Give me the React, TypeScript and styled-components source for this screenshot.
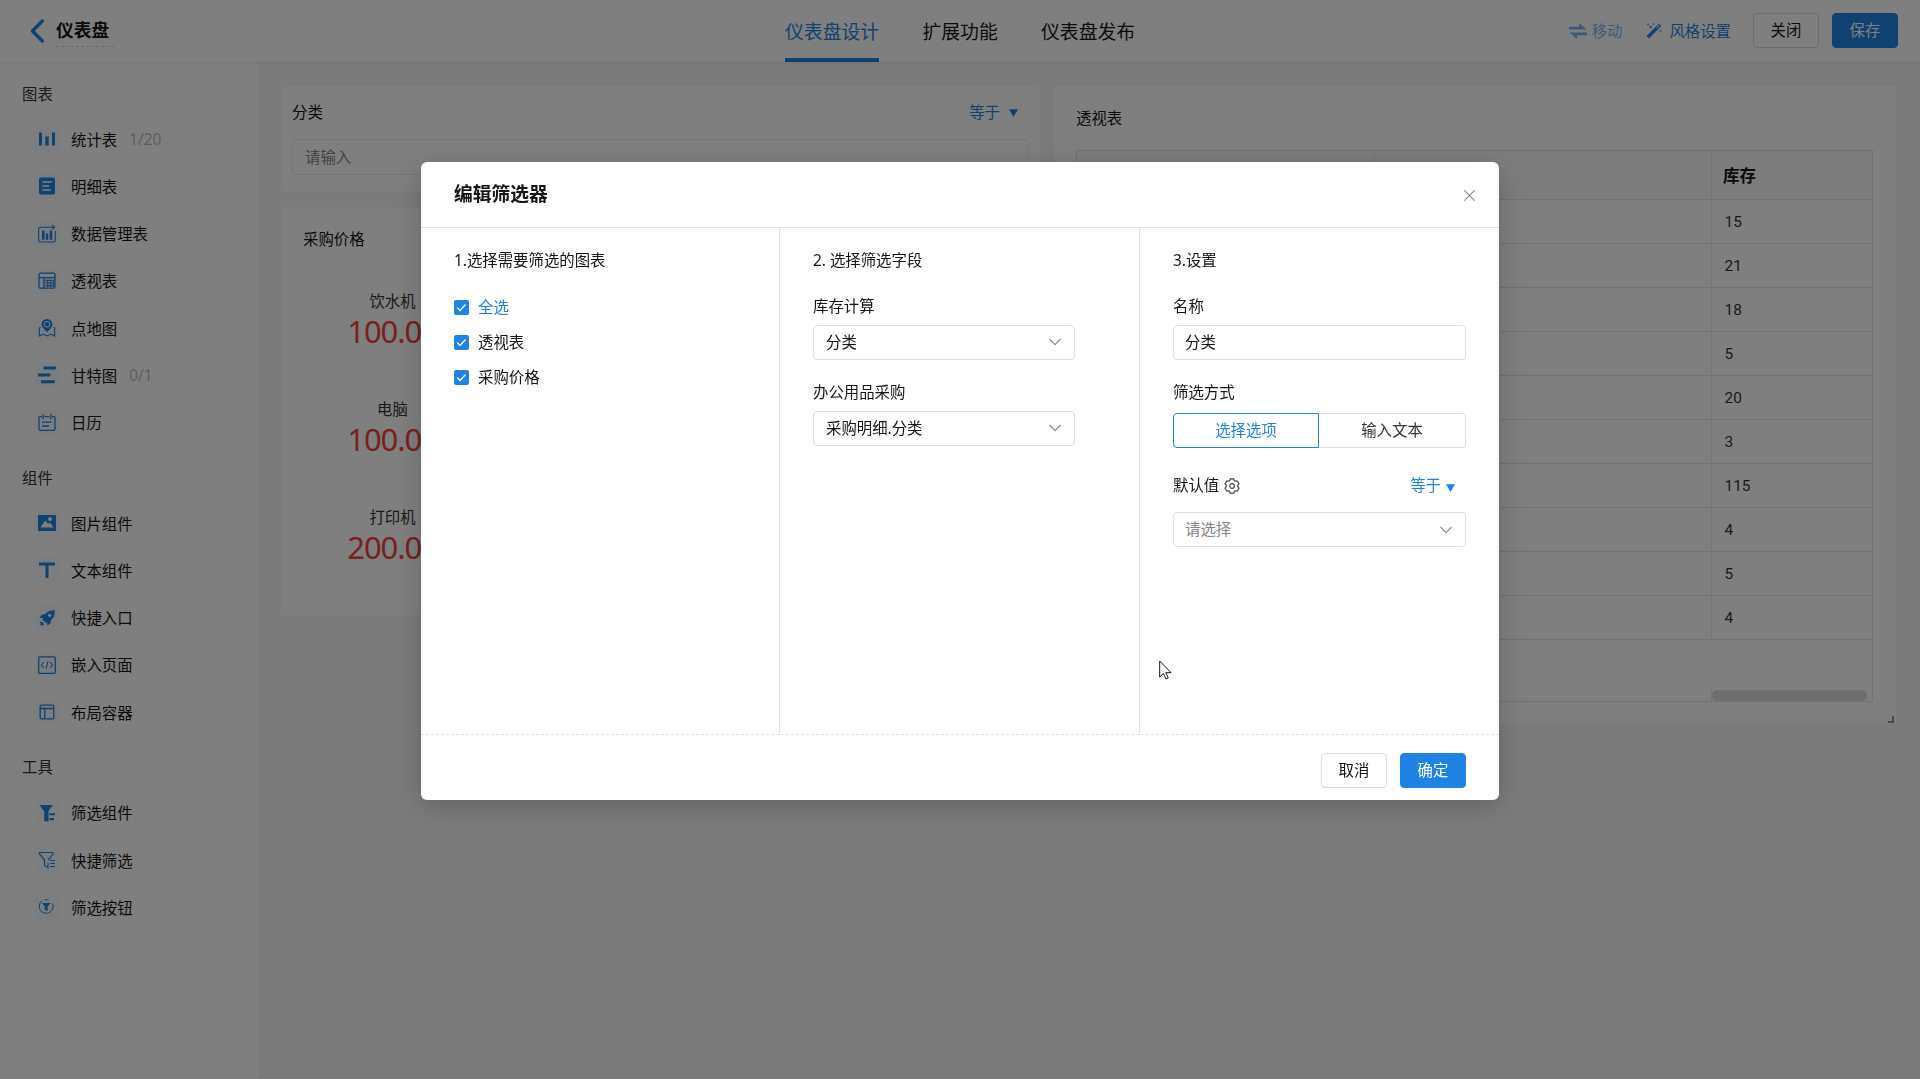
import React from 'react';
import styled, { createGlobalStyle, css } from 'styled-components';

const blue = '#1e83e3';

const Global = createGlobalStyle`
  * { box-sizing: border-box; }
  html, body { margin: 0; padding: 0; overflow: hidden; }
  body {
    font-family: "Noto Sans", "Noto Sans CJK SC", sans-serif;
    font-size: 15.4px;
    line-height: 22px;
    color: #151515;
    background: #f7f7f7;
  }
  svg { display: block; flex: none; }
`;

const Page = styled.div`
  width: 1920px;
  height: 1079px;
  display: flex;
  flex-direction: column;
`;

const Header = styled.header`
  position: relative;
  z-index: 1;
  height: 62px;
  flex: none;
  display: grid;
  grid-template-columns: 785px 1fr auto;
  background: #fff;
  box-shadow: 0 1px 3px rgba(0, 0, 0, 0.08);
`;

const HeaderLeft = styled.div`
  display: flex;
  align-items: flex-start;
  padding: 15px 0 0 30px;
  gap: 11px;
  svg { margin-top: 4px; }
`;

const PageTitle = styled.div`
  width: 58px;
  height: 32px;
  line-height: 31px;
  font-size: 17.7px;
  font-weight: 700;
  white-space: nowrap;
  border-bottom: 1px dashed #d6d6d6;
`;

const Tabs = styled.nav`
  display: flex;
  gap: 43.2px;
`;

const Tab = styled.div<{ $active?: boolean }>`
  height: 62px;
  line-height: 65px;
  font-size: 18.85px;
  white-space: nowrap;
  color: ${(p) => (p.$active ? blue : '#151515')};
  box-shadow: ${(p) => (p.$active ? `inset 0 -4px 0 ${blue}` : 'none')};
`;

const HeaderRight = styled.div`
  display: flex;
  align-items: center;
  height: 61px;
  padding-right: 22px;
`;

const Tool = styled.div<{ $dim?: boolean; $gap: number; $after: number }>`
  display: flex;
  align-items: center;
  gap: ${(p) => p.$gap}px;
  margin-right: ${(p) => p.$after}px;
  color: ${blue};
  opacity: ${(p) => (p.$dim ? 0.6 : 1)};
  span { padding-top: 2px; }
`;

const Button = styled.button<{ $primary?: boolean }>`
  width: 66px;
  height: 35px;
  padding: 0 0 1px;
  font: inherit;
  line-height: 31px;
  border-radius: 4px;
  border: 1px solid ${(p) => (p.$primary ? blue : '#dddddd')};
  background: ${(p) => (p.$primary ? blue : '#fff')};
  color: ${(p) => (p.$primary ? '#fff' : '#151515')};
`;

const ButtonRow = styled.div`
  display: flex;
  gap: 13px;
`;

const Body = styled.div`
  flex: 1;
  display: flex;
  min-height: 0;
`;

const Sidebar = styled.aside`
  width: 257px;
  flex: none;
  background: #fff;
`;

const Section = styled.section`
  padding-top: 8.7px;
`;

const SectionTitle = styled.div`
  height: 44.7px;
  line-height: 47px;
  padding-left: 22px;
  color: #333;
`;

const Item = styled.div`
  height: 47.25px;
  display: flex;
  align-items: center;
  padding-left: 34px;
`;

const ItemLabel = styled.span`
  padding-top: 3px;
`;

const IconBox = styled.div`
  width: 26px;
  height: 26px;
  margin-right: 11px;
  border-radius: 6px;
  background: #f8fafd;
  display: flex;
  align-items: center;
  justify-content: center;
`;

const Count = styled.span`
  margin-left: 12px;
  padding-top: 1px;
  color: #bdbdbd;
`;

const Canvas = styled.main`
  flex: 1;
  display: flex;
  align-items: flex-start;
  gap: 14px;
  padding: 24px 24px 0;
`;

const Column = styled.div`
  width: 759px;
  flex: none;
  display: flex;
  flex-direction: column;
  gap: 15px;
`;

const FilterCard = styled.div`
  height: 106px;
  padding: 16px 11px 0;
  border-radius: 6px;
  background: #fff;
`;

const FilterHead = styled.div`
  display: flex;
  justify-content: space-between;
  height: 22px;
  padding-right: 11px;
`;

const Operator = styled.div<{ $gap: number; $drop?: number }>`
  display: flex;
  align-items: center;
  gap: ${(p) => p.$gap}px;
  color: ${blue};
  svg { margin-top: ${(p) => p.$drop ?? 0}px; }
`;

const Field = styled.div<{ $muted?: boolean; $h?: number; $pl?: number; $pr?: number; $lift?: number }>`
  display: flex;
  align-items: center;
  justify-content: space-between;
  height: ${(p) => p.$h ?? 35}px;
  padding: 1px ${(p) => p.$pr ?? 12}px 0 ${(p) => p.$pl ?? 11}px;
  border: 1px solid #dedede;
  border-radius: 4px;
  background: #fff;
  color: ${(p) => (p.$muted ? '#858585' : '#151515')};
  svg { margin-bottom: ${(p) => p.$lift ?? 0}px; }
`;

const FilterField = styled(Field)`
  margin-top: 15px;
  border-color: #ececec;
`;

const StatCard = styled.div`
  height: 407.5px;
  padding: 22px 22px 0;
  background: #fff;
`;

const StatGrid = styled.div`
  margin-top: 40px;
  display: grid;
  grid-template-columns: 179px;
  grid-auto-rows: 108px;
`;

const Stat = styled.div`
  display: flex;
  flex-direction: column;
  align-items: center;
  color: #333;
`;

const StatValue = styled.div`
  margin-top: -1px;
  font-size: 31px;
  line-height: 38px;
  letter-spacing: -1.1px;
  color: #f04040;
`;

const TableCard = styled.div`
  position: relative;
  flex: 1;
  height: 637.5px;
  padding: 22px 23px 0 22px;
  background: #fff;
`;

const TableFrame = styled.div`
  margin-top: 20px;
  height: 552px;
  border: 1px solid #e3e3e3;
  display: flex;
  flex-direction: column;
  justify-content: space-between;
`;

const TableRow = styled.div<{ $head?: boolean }>`
  display: grid;
  grid-template-columns: 298px 337px 1fr;
  height: ${(p) => (p.$head ? 49 : 44)}px;
  border-bottom: 1px solid #e3e3e3;
  ${(p) =>
    p.$head &&
    css`
      background: #fafafa;
      font-size: 16.5px;
      font-weight: 700;
    `}
`;

const Cell = styled.div<{ $last?: boolean; $head?: boolean }>`
  display: flex;
  align-items: center;
  padding-top: ${(p) => (p.$head ? 2 : 0)}px;
  padding-left: ${(p) => (p.$head ? 11 : 12.5)}px;
  border-right: ${(p) => (p.$last ? 'none' : '1px solid #e8e8e8')};
  ${(p) => !p.$head && 'font-family: Roboto, sans-serif; color: #333;'}
`;

const Scroll = styled.div`
  align-self: flex-end;
  padding: 0 5px 0 0;
  border-left: 1px solid #e8e8e8;
`;

const Thumb = styled.div`
  width: 155px;
  height: 11px;
  border-radius: 5.5px;
  background: #dcdcdc;
`;

const ResizeHandle = styled.div`
  position: absolute;
  right: 2px;
  bottom: 1px;
  width: 6px;
  height: 7px;
  border-right: 2px solid #999;
  border-bottom: 2px solid #999;
`;

const Mask = styled.div`
  position: fixed;
  inset: 0;
  z-index: 10;
  background: rgba(0, 0, 0, 0.5);
  padding: 162px 0 0 421px;
`;

const Modal = styled.div`
  width: 1078px;
  height: 638px;
  display: flex;
  flex-direction: column;
  background: #fff;
  border-radius: 6px;
  box-shadow: 0 6px 28px rgba(0, 0, 0, 0.2);
`;

const ModalHead = styled.div`
  height: 66px;
  flex: none;
  display: flex;
  justify-content: space-between;
  align-items: center;
  padding: 0 24px 0 33px;
  border-bottom: 1px solid #e3e3e3;
  svg { margin-top: 2px; }
`;

const ModalTitle = styled.div`
  font-size: 18.8px;
  font-weight: 700;
  padding-bottom: 1px;
`;

const ModalBody = styled.div`
  flex: 1;
  display: grid;
  grid-template-columns: 359px 360px 1fr;
`;

const Pane = styled.div`
  display: flex;
  flex-direction: column;
  padding: 22px 33px 0;
  border-right: 1px solid #e3e3e3;
  &:last-child { border-right: none; }
`;

const PaneTitle = styled.div`
  height: 22px;
  margin-bottom: 24px;
`;

const CheckRow = styled.div<{ $link?: boolean }>`
  display: flex;
  align-items: center;
  gap: 9px;
  height: 35px;
  color: ${(p) => (p.$link ? blue : '#151515')};
`;

const CheckList = styled.div`
  margin-top: -6px;
`;

const Box = styled.div`
  width: 15px;
  height: 15px;
  border-radius: 2px;
  background: ${blue};
`;

const FormItem = styled.div<{ $w?: number; $mb: number; $gap: number }>`
  width: ${(p) => (p.$w ? `${p.$w}px` : 'auto')};
  margin-bottom: ${(p) => p.$mb}px;
  display: flex;
  flex-direction: column;
  gap: ${(p) => p.$gap}px;
`;

const LabelRow = styled.div`
  display: flex;
  justify-content: space-between;
  padding-right: 11px;
`;

const LabelWithIcon = styled.div`
  display: flex;
  align-items: center;
  gap: 5px;
`;

const Segmented = styled.div`
  display: grid;
  grid-template-columns: 146px 1fr;
  height: 35px;
`;

const Segment = styled.div<{ $active?: boolean }>`
  display: flex;
  align-items: center;
  justify-content: center;
  border: 1px solid ${(p) => (p.$active ? blue : '#dedede')};
  border-left-width: ${(p) => (p.$active ? 1 : 0)}px;
  border-radius: ${(p) => (p.$active ? '4px 0 0 4px' : '0 4px 4px 0')};
  color: ${(p) => (p.$active ? blue : '#333')};
`;

const ModalFoot = styled.div`
  height: 66px;
  flex: none;
  display: flex;
  justify-content: flex-end;
  padding: 18px 33px 0;
  border-top: 1px dashed #e3e3e3;
`;

const Pointer = styled.svg`
  position: absolute;
  left: 1159px;
  top: 660px;
`;

const Chevron = () => (
  <svg width="12" height="8" viewBox="0 0 12 8" fill="none" stroke="#8a8a8a" strokeWidth="1.1">
    <path d="M.5 1 6 6.6 11.5 1" />
  </svg>
);

const Caret = () => (
  <svg width="9" height="8" viewBox="0 0 9 8" fill={blue}>
    <path d="M0 .3h9L4.5 8z" />
  </svg>
);

const Gear = () => (
  <svg width="16" height="16" viewBox="0 0 16 16" fill="none" stroke="#444" strokeWidth="1.2" strokeLinejoin="round">
    <path d="M5.600 2.600 6.400.8h3.200l.8 1.800 1.100.6 1.900-.2 1.600 2.700-1.200 1.600v1.400l1.200 1.600-1.600 2.700-1.900-.2-1.100.6-.8 1.800H6.400l-.8-1.800-1.100-.6-1.900.2L1 10.300l1.200-1.600V7.300L1 5.700 2.600 3l1.900.2z" />
    <circle cx="8" cy="8" r="2.300" />
  </svg>
);

const icons: Record<string, React.ReactNode> = {
  stats: (
    <g fill={blue}>
      <path d="M1 2.5h3v13H1zM7.3 6.5h3.4v9H7.3zM14 2.5h3v13h-3z" />
    </g>
  ),
  detail: (
    <g>
      <rect x="1" y="0.5" width="16" height="17" rx="1.8" fill={blue} />
      <path d="M4.3 5h9.5M4.3 9h7M4.3 13h8.5" stroke="#fff" strokeWidth="1.3" />
    </g>
  ),
  data: (
    <g>
      <path d="M13 2.2H2.4Q.7 2.2.7 3.9v11.4Q.7 17 2.4 17h13.2q1.7 0 1.7-1.7V6M12 2.2h4.6M14 0l2.6 2.2L14 4.4" fill="none" stroke={blue} strokeWidth="1.1" />
      <path d="M4 5.5h2.6v9.3H4zM7.9 8.5h2.3v6.3H7.9zM11.6 5.5h2.6v9.3h-2.6z" fill={blue} />
    </g>
  ),
  pivot: (
    <g fill="none" stroke={blue} strokeWidth="1.3">
      <rect x="1" y="1.2" width="16" height="15" rx="1.5" />
      <path d="M1 5.7h16M6 5.7v10.5" />
      <path d="M7 8.200h8.400M7 11h8.400M7 13.700h8.400M9.700 8v7M12.600 8v7M15.300 8v7" strokeWidth="1.100" />
    </g>
  ),
  map: (
    <g>
      <path d="M9 13.2C6 9.9 3.6 7.8 3.6 5.4a5.4 5.4 0 0 1 10.8 0c0 2.4-2.4 4.5-5.4 7.8z" fill={blue} />
      <circle cx="9" cy="5.3" r="2.9" fill={blue} stroke="#fff" strokeWidth="1" />
      <path d="M2.6 8.3 1.3 9v8L5 15l4 2 4-2 3.7 2V9l-1.3-.7" fill="none" stroke={blue} strokeWidth="1.1" />
    </g>
  ),
  gantt: <path d="M5.5.5h12.3v3H5.5zM0 7.5h12.3v3H0zM3 14.2h13.8v3H3z" fill={blue} />,
  calendar: (
    <g fill="none" stroke={blue} strokeWidth="1.3">
      <path d="M4 2.7H2.3Q1 2.7 1 4v11q0 1.3 1.3 1.3h13.4Q17 16.300 17 15V4q0-1.300-1.300-1.300H14M6.600 2.700h4.800M5.200.2v5M12.800.2v5M4 8.200h9.500M4 12h7" />
    </g>
  ),
  image: (
    <g>
      <path d="M0 1h18v16H0z" fill={blue} />
      <path d="M2.500 13.500 7.200 6.500l3 3.500 1.800-1.500 3.500 5z" fill="#f8fafd" />
      <circle cx="12" cy="4.900" r="2" fill="#f8fafd" />
    </g>
  ),
  text: <path d="M1 1.500h16v3H10.500v12.500h-3V4.500H1z" fill={blue} />,
  rocket: (
    <g>
      <path d="M16.800 1.200C12 1 9 2.700 7 5.300c-2.300-.3-4 .7-5.400 3.500l3.300.3-.4 1.600 3 3 1.600-.4.3 3.300c2.800-1.400 3.800-3.100 3.500-5.400C15.500 9.200 17 6.200 16.800 1.200z" fill={blue} />
      <circle cx="11.700" cy="6.300" r="1.600" fill="#f8fafd" />
      <path d="M3.200 12.200 1.500 14l1.300.2-1 2.500 2.500-1 .3 1.300 1.700-1.800z" fill={blue} />
    </g>
  ),
  embed: (
    <g fill="none" stroke={blue} strokeWidth="1.300">
      <rect x=".7" y=".9" width="16.600" height="16.400" rx="1.200" />
      <path d="M5.800 6 3.300 9l2.500 3M12.200 6l2.500 3-2.500 3M10 5.500 8 12.500" strokeWidth="1.100" />
    </g>
  ),
  layout: (
    <g fill="none" stroke={blue} strokeWidth="1.300">
      <rect x="2.200" y="2.200" width="13.600" height="13.600" rx="1" />
      <path d="M2.200 5.500h13.600M6.800 5.500v10.300" />
    </g>
  ),
  filter: <path d="M1.500 1h13.300L10.500 7v10.500L6.200 17V7.500zM11.500 9.300H17v2h-5.500zM11.500 14H16v2.300h-4.500z" fill={blue} />,
  quick: (
    <g fill="none" stroke={blue} strokeWidth="1.200">
      <path d="M10.200 9.200 15 3V1.500H1.500V3l5 6v5.500l3.500 2.200v-5" />
      <path d="M12 9.500h5M12 12.500h5M12 15.500h5" />
    </g>
  ),
  button: (
    <g>
      <path d="M4.500 2.800A6.700 6.700 0 0 0 8 15.200 6.700 6.700 0 0 0 14.300 5.500M6.500 1.800Q8.500 1.300 10.500 2" fill="none" stroke={blue} strokeWidth="1" />
      <path d="M4 5h8.500L9.700 8.500v4.200l-3-.700V8.500z" fill={blue} />
    </g>
  ),
};

const sections: { title: string; items: [string, string, string?][] }[] = [
  {
    title: '图表',
    items: [
      ['stats', '统计表', '1/20'],
      ['detail', '明细表'],
      ['data', '数据管理表'],
      ['pivot', '透视表'],
      ['map', '点地图'],
      ['gantt', '甘特图', '0/1'],
      ['calendar', '日历'],
    ],
  },
  {
    title: '组件',
    items: [
      ['image', '图片组件'],
      ['text', '文本组件'],
      ['rocket', '快捷入口'],
      ['embed', '嵌入页面'],
      ['layout', '布局容器'],
    ],
  },
  {
    title: '工具',
    items: [
      ['filter', '筛选组件'],
      ['quick', '快捷筛选'],
      ['button', '筛选按钮'],
    ],
  },
];

const stats = [
  ['饮水机', '100.00'],
  ['电脑', '100.00'],
  ['打印机', '200.00'],
];

const stock = [15, 21, 18, 5, 20, 3, 115, 4, 5, 4];

const Check = () => (
  <Box>
    <svg width="15" height="15" viewBox="0 0 15 15" fill="none" stroke="#fff" strokeWidth="1.2">
      <path d="M3.200 7.500 6 10.500 11.500 4.500" />
    </svg>
  </Box>
);

export default function App() {
  return (
    <>
      <Global />
      <Page>
        <Header>
          <HeaderLeft>
            <svg width="15" height="24" viewBox="0 0 15 24" fill="none" stroke={blue} strokeWidth="3.4" strokeLinecap="round" strokeLinejoin="round">
              <path d="M12.300 2 2.500 12l9.800 10" />
            </svg>
            <PageTitle>仪表盘</PageTitle>
          </HeaderLeft>
          <Tabs>
            <Tab $active>仪表盘设计</Tab>
            <Tab>扩展功能</Tab>
            <Tab>仪表盘发布</Tab>
          </Tabs>
          <HeaderRight>
            <Tool $dim $gap={5} $after={24}>
              <svg width="18" height="16" viewBox="0 0 18 16" fill={blue}>
                <path d="M0 3.700h10V0l7.700 6.500H0zM18 12.300H8V16L.3 9.500H18z" />
              </svg>
              <span>移动</span>
            </Tool>
            <Tool $gap={7} $after={22}>
              <svg width="16" height="16" viewBox="0 0 16 16" fill={blue}>
                <path d="M12.900.8 15.200 3 3 15.400.500 13zM12.800 2.300l-2.600 2.500.700.700 2.600-2.500z" fillRule="evenodd" />
                <path d="M1 1.500l1-.9 1 .9-1 .9zM6.500 1l.9-.9.900.9-.9.900zM3 3.500l1.500-.5L6 3.800l-.5 1.700L4 5zM13.500 8l1-.9 1 .9-1 .9z" />
              </svg>
              <span>风格设置</span>
            </Tool>
            <ButtonRow>
              <Button>关闭</Button>
              <Button $primary>保存</Button>
            </ButtonRow>
          </HeaderRight>
        </Header>
        <Body>
          <Sidebar>
            {sections.map((s) => (
              <Section key={s.title}>
                <SectionTitle>{s.title}</SectionTitle>
                {s.items.map(([icon, label, count]) => (
                  <Item key={label}>
                    <IconBox>
                      <svg width="18" height="18" viewBox="0 0 18 18">{icons[icon]}</svg>
                    </IconBox>
                    <ItemLabel>{label}</ItemLabel>
                    {count && <Count>{count}</Count>}
                  </Item>
                ))}
              </Section>
            ))}
          </Sidebar>
          <Canvas>
            <Column>
              <FilterCard>
                <FilterHead>
                  <span>分类</span>
                  <Operator $gap={9}>等于<Caret /></Operator>
                </FilterHead>
                <FilterField $muted $h={36} $pl={12}>请输入</FilterField>
              </FilterCard>
              <StatCard>
                <div>采购价格</div>
                <StatGrid>
                  {stats.map(([name, value]) => (
                    <Stat key={name}>
                      <div>{name}</div>
                      <StatValue>{value}</StatValue>
                    </Stat>
                  ))}
                </StatGrid>
              </StatCard>
            </Column>
            <TableCard>
              <div>透视表</div>
              <TableFrame>
                <div>
                  <TableRow $head>
                    <Cell $head />
                    <Cell $head />
                    <Cell $head $last>库存</Cell>
                  </TableRow>
                  {stock.map((n, i) => (
                    <TableRow key={i}>
                      <Cell />
                      <Cell />
                      <Cell $last>{n}</Cell>
                    </TableRow>
                  ))}
                </div>
                <Scroll><Thumb /></Scroll>
              </TableFrame>
              <ResizeHandle />
            </TableCard>
          </Canvas>
        </Body>
      </Page>
      <Mask>
        <Modal>
          <ModalHead>
            <ModalTitle>编辑筛选器</ModalTitle>
            <svg width="11" height="11" viewBox="0 0 11 11" stroke="#8a8a8a" strokeWidth="1.100">
              <path d="M.3.3l10.400 10.400M10.700.3.3 10.700" />
            </svg>
          </ModalHead>
          <ModalBody>
            <Pane>
              <PaneTitle>1.选择需要筛选的图表</PaneTitle>
              <CheckList>
                <CheckRow $link><Check />全选</CheckRow>
                <CheckRow><Check />透视表</CheckRow>
                <CheckRow><Check />采购价格</CheckRow>
              </CheckList>
            </Pane>
            <Pane>
              <PaneTitle>2. 选择筛选字段</PaneTitle>
              <FormItem $w={262} $mb={22} $gap={7}>
                <div>库存计算</div>
                <Field $pl={12} $pr={13} $lift={3}>分类<Chevron /></Field>
              </FormItem>
              <FormItem $w={262} $mb={0} $gap={7}>
                <div>办公用品采购</div>
                <Field $pl={12} $pr={13} $lift={3}>采购明细.分类<Chevron /></Field>
              </FormItem>
            </Pane>
            <Pane>
              <PaneTitle>3.设置</PaneTitle>
              <FormItem $mb={22} $gap={7}>
                <div>名称</div>
                <Field>分类</Field>
              </FormItem>
              <FormItem $mb={27} $gap={9}>
                <div>筛选方式</div>
                <Segmented>
                  <Segment $active>选择选项</Segment>
                  <Segment>输入文本</Segment>
                </Segmented>
              </FormItem>
              <FormItem $mb={0} $gap={15}>
                <LabelRow>
                  <LabelWithIcon>默认值<Gear /></LabelWithIcon>
                  <Operator $gap={5} $drop={4}>等于<Caret /></Operator>
                </LabelRow>
                <Field $muted $pr={13}>请选择<Chevron /></Field>
              </FormItem>
            </Pane>
          </ModalBody>
          <ModalFoot>
            <ButtonRow>
              <Button>取消</Button>
              <Button $primary>确定</Button>
            </ButtonRow>
          </ModalFoot>
        </Modal>
        <Pointer width="13" height="20" viewBox="0 0 13 20" fill="#fff" stroke="#111" strokeWidth="1">
          <path d="M.7 1v16l3.700-3.500L7 19l2.300-1-2.500-5.300H12z" />
        </Pointer>
      </Mask>
    </>
  );
}
